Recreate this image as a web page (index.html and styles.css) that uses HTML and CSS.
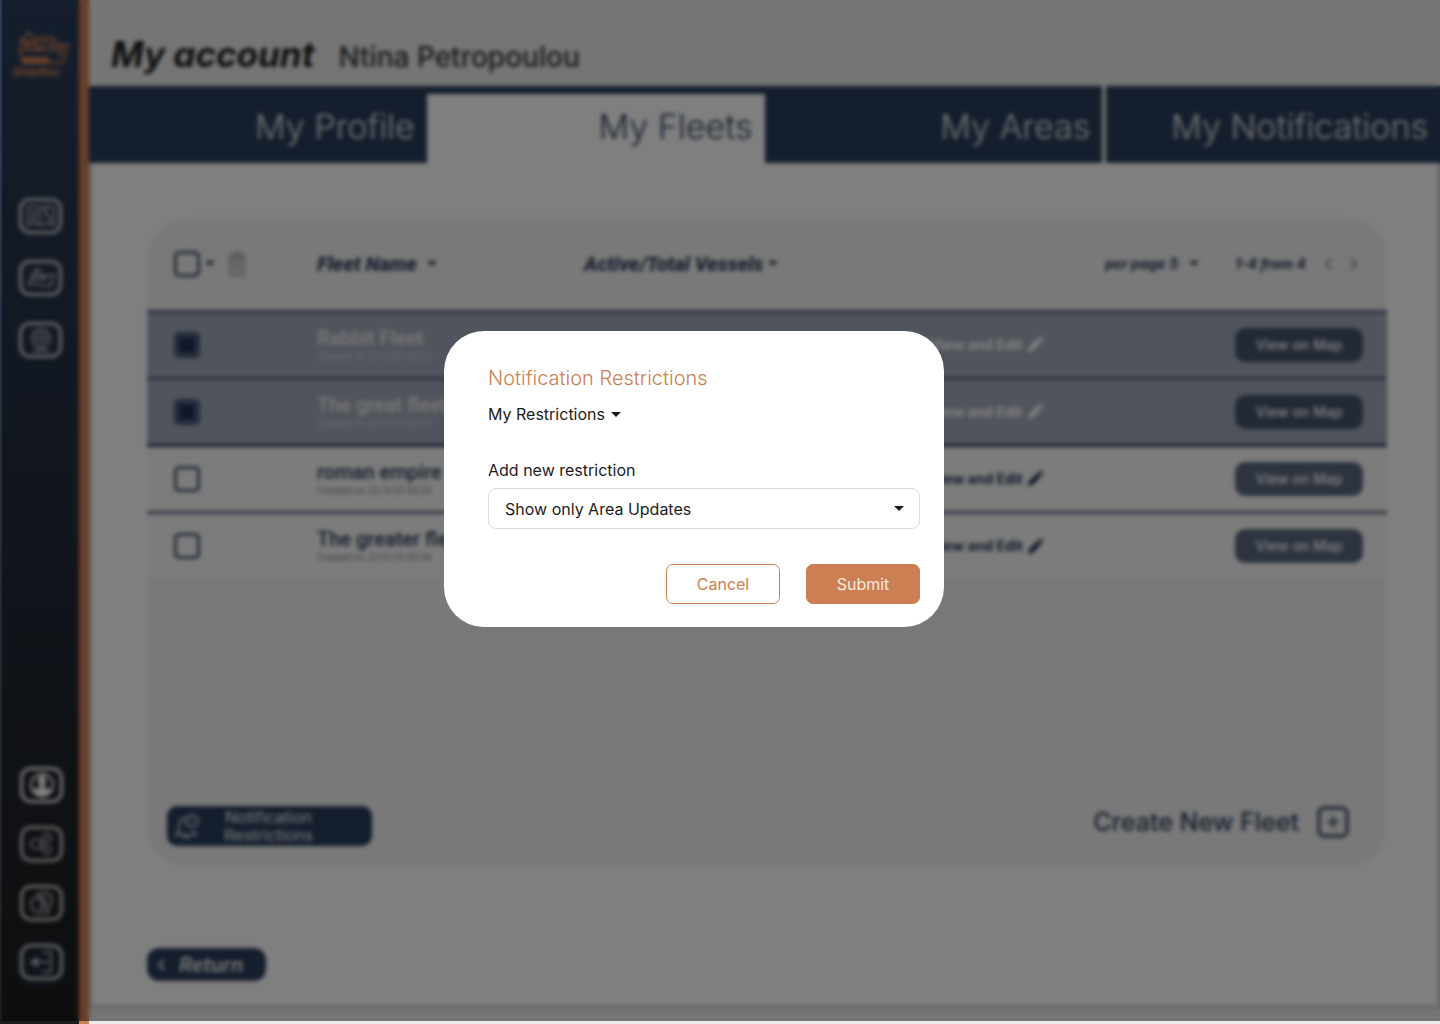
FILE: index.html
```html
<!DOCTYPE html>
<html lang="en">
<head>
<meta charset="utf-8">
<title>My account</title>
<link rel="stylesheet" href="styles.css">
</head>
<body>
<svg width="0" height="0" class="sprite" aria-hidden="true">
  <symbol id="caret" viewBox="0 0 10 5"><path d="M0 0h10L5 5z" fill="currentColor"/></symbol>
  <symbol id="pencil" viewBox="0 0 18 18"><path d="M1 17l1-5L11 3l4 4-9 9zM12 2l2-1.500q1-.5 2 .5l.5.5q1 1 .2 2L16 6z" fill="currentColor"/></symbol>
</svg>
<div class="app">
  <aside class="sidebar">
    <a class="logo" href="#">
      <svg width="54" height="36" viewBox="0 0 54 36" fill="none" stroke="currentColor" stroke-width="2">
        <path d="M5 18v-9h3l5-7 5 7v9M5 12h13M10 18v-4h3v4"/>
        <path d="M21 8h6v10h-6zM28 7h9v4"/>
        <path d="M30 10l7 8M37 8l1 9M38 13h5v5"/>
        <path d="M3 20h35l5-1 3-4h6l-5 18H31"/>
        <path d="M3 19l3 8"/>
        <path d="M5 27h30l-4 7H6z" fill="currentColor" stroke="none"/>
        <path d="M42 28l5-10"/>
      </svg>
      <span>ShipRec</span>
    </a>
    <nav class="nav" aria-label="Main">
      <a class="nav-item" href="#" aria-label="Map"><svg width="30" height="24" viewBox="0 0 30 24"><path d="M2 3l6-1 7 2 6-2 7 2v17l-7-2-6 2-7-2-6 2zM8 7v10M15 4l-3 6 3 4-2 6M20 2v8l4 3v7M5 8h4M5 15h5M18 8l4 3"/></svg></a>
      <a class="nav-item" href="#" aria-label="Fleets"><svg width="30" height="24" viewBox="0 0 30 24"><path d="M4 12l7-9 4 4 5 5M10 6v6M15 7v5M6 13h13l3-4h6l-3 11L2 18z"/></svg></a>
      <a class="nav-item" href="#" aria-label="Areas"><svg width="30" height="26" viewBox="0 0 30 26"><circle cx="15" cy="11" r="9"/><path d="M15 4v13M11 6q-2 5 1 9M19 6q2 5-1 9M12 20v3M18 20v3M7 24h16"/></svg></a>
    </nav>
    <nav class="nav nav-bottom" aria-label="Account">
      <a class="nav-item nav-current" href="#" aria-label="Account"><svg width="30" height="28" viewBox="0 0 30 28"><circle cx="15" cy="14" r="11"/><ellipse cx="15" cy="10" rx="3" ry="5" fill="currentColor"/><path d="M6 19q5 0 7-2h4q2 2 7 2-2 6-9 6t-9-6z" fill="currentColor"/></svg></a>
      <a class="nav-item" href="#" aria-label="Share"><svg width="30" height="24" viewBox="0 0 30 24"><circle cx="9" cy="12" r="5"/><circle cx="20" cy="6" r="4"/><circle cx="20" cy="18" r="4"/><path d="M13 10l4-2M13 14l4 2"/></svg></a>
      <a class="nav-item" href="#" aria-label="Help"><svg width="30" height="24" viewBox="0 0 30 24"><path d="M10 5q4-5 10-3 6 3 5 9-1 4-4 5v6H11q-7-2-7-9 1-7 8-8 7 1 7 7t-6 6M11 10q1-3 4-1 2 3-1 5v3"/></svg></a>
      <a class="nav-item nav-exit" href="#" aria-label="Log out"><svg width="30" height="24" viewBox="0 0 30 24"><path d="M15 2h9v20h-9M22 12H8"/><path d="M4 12l6-4v8z" fill="currentColor"/></svg></a>
    </nav>
  </aside>

  <main class="main">
    <header class="page-head">
      <h1>My account</h1>
      <p>Ntina Petropoulou</p>
    </header>
    <nav class="tabs" aria-label="Account sections">
      <a class="tab" href="#">My Profile</a>
      <a class="tab tab-active" href="#" aria-current="page">My Fleets</a>
      <a class="tab" href="#">My Areas</a>
      <a class="tab tab-split" href="#">My Notifications</a>
    </nav>

    <div class="content">
      <section class="panel">
        <table class="fleets">
          <colgroup><col class="c-select"><col class="c-name"><col class="c-vessels"><col><col class="c-map"></colgroup>
          <thead>
            <tr>
              <th><div class="tools">
                <input class="check" type="checkbox" aria-label="Select all fleets">
                <button class="plain" aria-label="Selection options"><svg class="caret" width="10" height="5"><use href="#caret"/></svg></button>
                <button class="plain trash" aria-label="Delete"><svg width="20" height="26" viewBox="0 0 20 26" fill="none" stroke="currentColor" stroke-width="3"><path d="M1 6h18M5 6l2-4h6l2 4M3 8l1 16h12l1-16zM8 11v9M12 11v9"/></svg></button>
              </div></th>
              <th><button class="plain sort">Fleet Name <svg class="caret" width="10" height="5"><use href="#caret"/></svg></button></th>
              <th><button class="plain sort sort-tight">Active/Total Vessels <svg class="caret" width="10" height="5"><use href="#caret"/></svg></button></th>
              <th><div class="per-page"><select aria-label="Fleets per page"><option>per page 5</option></select><svg class="caret" width="10" height="5"><use href="#caret"/></svg></div></th>
              <th><div class="pager"><span>1-4 from 4</span>
                <button class="plain" aria-label="Previous"><svg width="8" height="12" viewBox="0 0 8 12" fill="none" stroke="currentColor" stroke-width="2"><path d="M7 1L2 6l5 5"/></svg></button>
                <button class="plain" aria-label="Next"><svg width="8" height="12" viewBox="0 0 8 12" fill="none" stroke="currentColor" stroke-width="2"><path d="M1 1l5 5-5 5"/></svg></button>
              </div></th>
            </tr>
          </thead>
          <tbody>
            <tr class="selected">
              <td><input class="check" type="checkbox" checked aria-label="Rabbit Fleet"></td>
              <td><div class="name">Rabbit Fleet</div><div class="created">Created on 22/3/25 00:23</div></td>
              <td></td>
              <td><button class="plain edit">View and Edit <svg width="17" height="17"><use href="#pencil"/></svg></button></td>
              <td><button class="map">View on Map</button></td>
            </tr>
            <tr class="selected">
              <td><input class="check" type="checkbox" checked aria-label="The great fleet"></td>
              <td><div class="name">The great fleet</div><div class="created">Created on 22/3/25 00:24</div></td>
              <td></td>
              <td><button class="plain edit">View and Edit <svg width="17" height="17"><use href="#pencil"/></svg></button></td>
              <td><button class="map">View on Map</button></td>
            </tr>
            <tr class="after-selected">
              <td><input class="check" type="checkbox" aria-label="roman empire"></td>
              <td><div class="name">roman empire</div><div class="created">Created on 22/3/25 00:24</div></td>
              <td></td>
              <td><button class="plain edit">View and Edit <svg width="17" height="17"><use href="#pencil"/></svg></button></td>
              <td><button class="map">View on Map</button></td>
            </tr>
            <tr>
              <td><input class="check" type="checkbox" aria-label="The greater fleet"></td>
              <td><div class="name">The greater fleet</div><div class="created">Created on 22/3/25 00:24</div></td>
              <td></td>
              <td><button class="plain edit">View and Edit <svg width="17" height="17"><use href="#pencil"/></svg></button></td>
              <td><button class="map">View on Map</button></td>
            </tr>
          </tbody>
        </table>
        <div class="panel-foot">
          <button class="restrict">
            <svg width="28" height="28" viewBox="0 0 28 28" fill="none" stroke="currentColor" stroke-width="2"><path d="M13 6Q6 6 6 14v5l-3 4h20l-3-4M10 24q3 4 6 0"/><circle cx="19" cy="9" r="6"/><path d="M19 6v4"/></svg>
            <span>Notification<br>Restrictions</span>
          </button>
          <button class="plain create">Create New Fleet
            <svg width="32" height="32" viewBox="0 0 32 32" fill="none" stroke="currentColor" stroke-width="3"><rect x="2" y="2" width="28" height="28" rx="5"/><path d="M16 10v12M10 16h12" stroke-width="2"/></svg>
          </button>
        </div>
      </section>
      <a class="return" href="#"><svg width="8" height="12" viewBox="0 0 8 12" fill="none" stroke="currentColor" stroke-width="2"><path d="M7 1L2 6l5 5"/></svg>Return</a>
    </div>
  </main>
</div>

<div class="backdrop">
  <form class="dialog" role="dialog" aria-modal="true" aria-labelledby="dialog-title">
    <h2 id="dialog-title">Notification Restrictions</h2>
    <button type="button" class="plain mine">My Restrictions <svg class="caret" width="10" height="5"><use href="#caret"/></svg></button>
    <label for="restriction">Add new restriction</label>
    <div class="picker">
      <select id="restriction"><option>Show only Area Updates</option></select>
      <svg class="caret" width="10" height="5"><use href="#caret"/></svg>
    </div>
    <div class="actions">
      <button type="button" class="btn">Cancel</button>
      <button type="submit" class="btn btn-fill">Submit</button>
    </div>
  </form>
</div>
</body>
</html>
```

FILE: styles.css
```css
:root {
  --navy: #2a3c5a;
  --orange: #cc7f52;
  --page: #ebebeb;
}

* { box-sizing: border-box; }

body {
  margin: 0;
  font-family: Inter, "Liberation Sans", sans-serif;
  background: var(--page);
  color: #1c1c1c;
}

h1, h2, p { margin: 0; }
a { color: inherit; text-decoration: none; }
button, select, input { font: inherit; color: inherit; }

.sprite { position: absolute; }

.plain {
  display: inline-flex;
  align-items: center;
  padding: 0;
  border: 0;
  background: none;
}

.app { display: flex; min-height: 100vh; }

/* Sidebar */
.sidebar {
  display: flex;
  flex-direction: column;
  width: 89px;
  padding: 30px 0 44px;
  border-right: 10px solid var(--orange);
  background: linear-gradient(var(--navy), #1c1c1c);
}

.logo {
  display: flex;
  flex-direction: column;
  margin-left: 12px;
  color: var(--orange);
  font: italic 700 12px/12px Inter, sans-serif;
}

.logo svg { margin-left: 4px; }

.nav {
  display: flex;
  flex-direction: column;
  gap: 26px;
  margin: 120px 0 0 19px;
  color: #b0b4ba;
}

.nav-bottom { gap: 23px; margin: auto 0 0 20px; }

.nav-item {
  display: flex;
  align-items: center;
  justify-content: center;
  width: 43px;
  height: 36px;
  border: 3px solid #cfcfcf;
  border-radius: 11px;
}

.nav-item svg { fill: none; stroke: currentColor; stroke-width: 2; }
.nav-current { border-color: #f0f0f0; color: #fff; }
.nav-exit { box-shadow: 0 2px 0 4px #1d2433; background: #1d2433; }

/* Header and tabs */
.main { display: flex; flex: 1; flex-direction: column; min-width: 0; }

.page-head {
  display: flex;
  align-items: baseline;
  gap: 24px;
  height: 86px;
  padding: 32px 22px 0;
}

.page-head h1 { font-size: 35px; line-height: 44px; font-style: italic; font-weight: 700; }
.page-head p { font-size: 28px; line-height: 36px; font-weight: 500; color: #333; }

.tabs {
  display: grid;
  grid-template-columns: repeat(4, 1fr);
  background: var(--navy);
}

.tab {
  height: 77px;
  padding: 0 12px;
  color: #e4e4e4;
  font-size: 34px;
  line-height: 82px;
  font-weight: 300;
  text-align: right;
  white-space: nowrap;
}

.tab-active {
  height: 69px;
  margin-top: 8px;
  background: #fff;
  color: var(--navy);
  line-height: 66px;
}

.tab-split { border-left: 4px solid var(--page); }

.content {
  display: flex;
  flex: 1;
  flex-direction: column;
  align-items: flex-start;
  margin: 0 0 15px;
  padding: 55px 50px 24px 55px;
  border: solid #cfd2d8;
  border-width: 0 3px 4px;
  background: #fff;
}

/* Fleet panel */
.panel {
  display: flex;
  flex: 1;
  flex-direction: column;
  justify-content: space-between;
  width: 100%;
  margin-bottom: 82px;
  border-radius: 40px;
  background: #f2f2f2;
}

.fleets {
  width: 100%;
  table-layout: fixed;
  border-collapse: collapse;
  color: var(--navy);
  font-family: Roboto, sans-serif;
  text-align: left;
}

.c-select { width: 170px; }
.c-name { width: 267px; }
.c-vessels { width: 27%; }
.c-map { width: 152px; }

.fleets th { height: 93px; padding: 0; }
.fleets td { height: 67px; padding: 0; }
.fleets tbody tr { border-top: 3px solid #5a6880; background: #f8f8f8; }
.fleets th:first-child, .fleets td:first-child { padding-left: 27px; }

.fleets .selected { background: #a1a8b8; }
.fleets .after-selected { border-top-color: var(--navy); }

.tools { display: flex; align-items: center; }
.tools .caret { margin: 0 12px 0 5px; }
.trash { color: #b4b8be; }

.check {
  display: block;
  width: 26px;
  height: 26px;
  margin: 0;
  appearance: none;
  border: 3px solid #4a5a75;
  border-radius: 5px;
}

.check:checked {
  border-width: 6px;
  background: #1c2c50;
}

.sort { gap: 10px; font-size: 20px; line-height: 24px; font-style: italic; font-weight: 800; }
.sort-tight { gap: 5px; }

.per-page {
  display: flex;
  align-items: center;
  justify-content: flex-end;
  gap: 10px;
  padding-right: 36px;
}

.per-page select {
  padding: 0;
  appearance: none;
  border: 0;
  background: none;
  font: italic 700 14px/20px Inter, sans-serif;
}

.pager { display: flex; align-items: center; gap: 18px; font: italic 700 14px/20px Inter, sans-serif; }
.pager .plain { color: #8a909c; }

.name { font-size: 20px; line-height: 24px; font-weight: 500; }
.created { font-size: 10px; line-height: 14px; color: #8a8f99; }
.selected .name { color: #f0f0f0; }
.selected .created { color: #d0d4dc; }

.edit { gap: 4px; margin-left: 11px; font: 700 14px/20px Inter, sans-serif; }
.selected .edit { color: #fff; }

.map {
  width: 128px;
  height: 34px;
  border: 0;
  border-radius: 10px;
  background: #5a6880;
  color: #fff;
  font: 500 14px/20px Inter, sans-serif;
}

.selected .map { background: #45536e; }

.panel-foot {
  display: flex;
  align-items: flex-start;
  justify-content: space-between;
  padding: 0 38px 20px 20px;
}

.restrict {
  display: flex;
  align-items: center;
  gap: 23px;
  width: 205px;
  height: 40px;
  padding: 0 6px;
  border: 0;
  border-radius: 10px;
  background: var(--navy);
  color: #f4f4f4;
  font-size: 16px;
  line-height: 18px;
}

.restrict svg { color: #c4c9d4; }

.create { gap: 18px; color: var(--navy); font-size: 25px; line-height: 32px; font-weight: 500; }

.return {
  display: flex;
  align-items: center;
  gap: 14px;
  width: 119px;
  height: 33px;
  padding: 0 10px;
  border-radius: 12px;
  background: var(--navy);
  color: #f0f0f0;
  font-size: 20px;
  font-style: italic;
  font-weight: 600;
}

/* Dialog */
.backdrop {
  position: fixed;
  inset: 0 0 3px 2px;
  display: flex;
  align-items: center;
  justify-content: center;
  padding: 0 54px 63px 0;
  background: rgb(0 0 0 / 50%);
  backdrop-filter: blur(2px);
}

.dialog {
  display: flex;
  flex-direction: column;
  width: 500px;
  padding: 35px 24px 23px 44px;
  border-radius: 40px;
  background: #fff;
  font-size: 16px;
  line-height: 20px;
}

.dialog h2 {
  margin-bottom: 14px;
  color: var(--orange);
  font-size: 20px;
  line-height: 24px;
  font-weight: 300;
}

.mine { align-self: flex-start; gap: 6px; }

.dialog label { margin: 36px 0 8px; }

.picker { position: relative; }

.picker select {
  width: 100%;
  height: 41px;
  padding: 0 16px;
  appearance: none;
  border: 1px solid #dcdcdc;
  border-radius: 8px;
  background: #fff;
}

.picker .caret { position: absolute; top: 18px; right: 16px; pointer-events: none; }

.actions {
  display: flex;
  justify-content: flex-end;
  gap: 26px;
  margin-top: 35px;
}

.btn {
  width: 114px;
  height: 40px;
  border: 1px solid var(--orange);
  border-radius: 7px;
  background: #fff;
  color: var(--orange);
}

.btn-fill { background: var(--orange); color: #f6e8e0; }
```
